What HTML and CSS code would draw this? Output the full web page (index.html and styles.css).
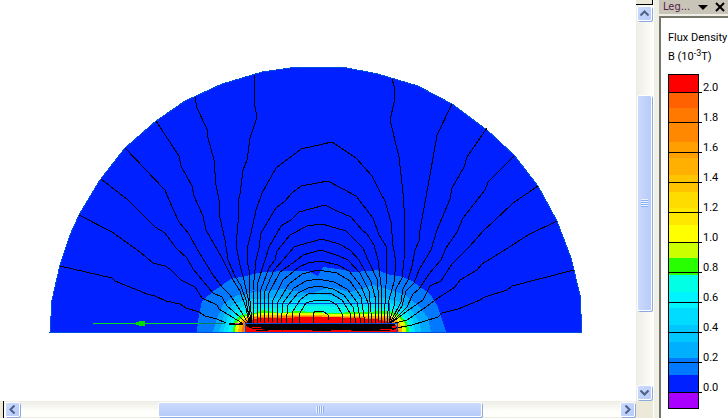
FILE: index.html
```html
<!DOCTYPE html>
<html lang="en">
<head>
<meta charset="utf-8">
<title>Flux Density</title>
<link rel="stylesheet" href="styles.css">
</head>
<body>
<div class="app">
  <main class="view">
    <svg class="plot" viewBox="0 0 636 401" preserveAspectRatio="xMinYMin meet" shape-rendering="crispEdges" role="img" aria-label="Flux density field plot">
      <path fill="#0020ff" stroke="#0050dc" d="M50 332 52 300 60 265 70 235 79 215 100 180 125 148 156 121 185 101 222 84 262 72 297 67 342 67 378 74 418 86 452 104 487 130 514 155 538 186 557 221 571 258 580 295 582 332Z"/>
      <path fill="#0078ff" d="M197 332 198 320 202 301 215 290 231 279 250 275 262 272 290 271 308 271 318 276 323 267 345 270 350 272 371 271 377 270 390 275 400 276 412 281 430 294 437 305 444 325 446 332Z"/>
      <path fill="#00a8ff" d="M213 332 217 318 224 303 238 295 255 292 285 289 310 294 330 287 350 292 373 285 390 290 405 295 420 307 428 318 431 332Z"/>
      <path fill="#00c8ff" d="M219 332 224 315 233 304 248 299 290 298 318 294 350 299 385 298 400 302 413 312 420 323 421 332Z"/>
      <path fill="#00e4ff" d="M223 332 228 318 236 309 252 304 310 300 350 303 390 303 405 310 413 320 415 332Z"/>
      <path fill="#00ffe4" d="M228 332 231 321 237 313 252 309 310 306 389 308 402 314 410 323 411 332Z"/>
      <path fill="#28ff00" d="M233 332 234 322 240 315 255 313 263 310 280 313 297 311 330 313 389 311 398 314 406 321 409 328 409 332Z"/>
      <path fill="#e8ff00" d="M235 332 236 323 242 317 260 313 389 314 398 317 405 324 406 332Z"/>
      <path fill="#ffb000" d="M238 332 240 322 247 317 265 315 389 316 398 321 402 327 402 332Z"/>
      <path fill="#ff7000" d="M242 332 243 322 255 317 300 316 388 318 397 324 399 332Z"/>
      <path fill="#ff0000" d="M245 332V323L258 318 330 317 375 319 390 322 398 327V332Z"/>
      <path class="outline" d="M253.500 323V303.500H389.500V323"/>
      <g class="flux">
        <path d="M60 266 112 278 115 281 147 294 155 296 166 301 180 304 186 308 199 312 205 316 217 319 226 323"/>
        <path d="M79 215 112 232 140 252 153 263 165 266 170 269 181 280 195 287 202 298 217 305 219 309 232 317 242 323"/>
        <path d="M101 179 128 200 155 227 165 233 176 248 187 258 193 269 213 293 222 297 227 306 240 317 246 323"/>
        <path d="M125 148 165 190 169 200 179 222 189 234 197 249 213 275 222 287 230 295 242 313 248 323"/>
        <path d="M156 121 179 156 181 166 192 186 194 196 203 216 206 230 222 258 233 280 240 291 246 308 249 323"/>
        <path d="M195 97 197 108 207 129 208 138 214 160 216 185 219 200 220 218 225 240 228 260 235 276 241 286 246 300 250 323"/>
        <path d="M254 75 254 102 257 117 250 138 247 160 243 170 240 194 238 202 239 212 236 245 240 265 244 280 248 298 251 323"/>
        <path d="M252 323 249 290 249 270 247 260 248 245 251 233 256 210 262 193 276 168 301 149 332 142 356 158 372 176 380 192 385 201 391 222 393 246 396 262 394 282 389 300 387 323"/>
        <path d="M254 323 253 290 256 260 259 248 261 233 276 208 284 202 292 193 301 186 328 181 356 196 373 218 379 235 386 246 387 260 386 285 384 323"/>
        <path d="M257 323 257 285 265 260 269 247 281 226 291 220 299 212 325 205 337 211 351 217 362 230 367 234 374 245 378 260 381 285 381 323"/>
        <path d="M260 323 261 289 269 268 275 260 277 251 290 235 307 226 322 224 346 231 363 248 368 260 377 279 379 300 378 323"/>
        <path d="M264 323 265 291 274 270 283 260 294 247 300 245 322 239 339 244 350 250 359 260 371 282 376 300 375 323"/>
        <path d="M268 323 269 293 280 272 297 260 303 255 321 250 339 256 348 260 360 273 369 291 372 323"/>
        <path d="M272 323 273 300 283 280 299 267 308 263 321 261 338 265 349 271 361 286 368 303 369 323"/>
        <path d="M277 323 278 302 289 284 302 274 318 270 337 273 350 281 361 297 365 323"/>
        <path d="M281 323 283 303 294 288 306 281 318 279 334 282 347 289 357 302 361 323"/>
        <path d="M286 323 288 305 298 293 308 288 318 286 333 289 344 295 353 307 356 323"/>
        <path d="M292 323 293 311 300 300 308 294 330 293 342 300 350 313 350 323"/>
        <path d="M299 323 300 313 306 303 316 300 330 301 337 305 342 314 342 323"/>
        <path d="M313 323V313L316 311H323L328 315V320"/>
        <path d="M392 79 394 86 394 103 390 120 399 157 403 193 405 222 404 260 402 278 396 289 394 306 389 323"/>
        <path d="M452 104 437 135 430 175 420 230 419 241 415 250 412 266 408 280 403 289 401 302 390 323"/>
        <path d="M487 128 467 157 464 167 452 188 450 199 437 230 431 250 419 270 414 283 406 291 402 306 391 323"/>
        <path d="M514 156 488 182 485 190 463 218 457 232 446 248 441 260 429 274 419 289 413 294 407 307 391 323"/>
        <path d="M538 186 513 203 493 222 484 230 470 246 452 264 441 281 430 286 423 300 410 309 391 323"/>
        <path d="M557 221 528 235 503 251 482 264 477 270 460 280 455 287 435 300 426 307 407 320 391 324"/>
        <path d="M574 270 512 286 507 290 485 297 480 300 458 309 442 313 438 317 412 325 391 329"/>
      </g>
      <path fill="#000" d="M245 323H390L397 325 390 327 396 329 388 331H285L279 330 257 331 251 328 247 327Z"/>
      <path fill="none" stroke="#f00" d="M252 327.500H261M253 329.500H263M260 331.500H282M283 330.500H312M331 330.500H351M350 331.500H390M380 329.500H392"/>
      <path class="outline" d="M50 332.500H582M245.500 332V323.500H397.500V332"/>
      <path fill="none" stroke="#00dc20" d="M93 323.500H199"/>
      <path fill="none" stroke="#008060" d="M199 323.500H225"/>
      <path fill="none" stroke="#000" stroke-width="2" d="M229 324H243"/>
      <path fill="none" stroke="#e040b0" d="M235 323.500H239"/>
      <path fill="#00dc00" d="M134 323 140 321H145V326H140L134 324Z"/>
    </svg>
  </main>

  <div class="bar vertical">
    <span class="splitbox"></span>
    <button class="key" type="button" aria-label="Scroll up"><svg viewBox="0 0 9 9"><path d="M.5 6.500 4.500 2.500 8.500 6.500"/></svg></button>
    <span class="gap"></span>
    <span class="thumb"><i class="grip"></i></span>
    <span class="gap"></span>
    <button class="key" type="button" aria-label="Scroll down"><svg viewBox="0 0 9 9"><path d="M.5 2.500 4.500 6.500 8.500 2.500"/></svg></button>
  </div>

  <div class="bar horizontal">
    <span class="splitbox"></span>
    <button class="key" type="button" aria-label="Scroll left"><svg viewBox="0 0 9 9"><path d="M6.500 .5 2.500 4.500 6.500 8.500"/></svg></button>
    <span class="gap"></span>
    <span class="thumb"><i class="grip"></i></span>
    <span class="gap"></span>
    <button class="key" type="button" aria-label="Scroll right"><svg viewBox="0 0 9 9"><path d="M2.500 .5 6.500 4.500 2.500 8.500"/></svg></button>
  </div>

  <aside class="panel">
    <header class="caption">
      <h2>Leg...</h2>
      <button type="button" aria-label="Panel menu"><svg width="10" height="10" viewBox="0 0 10 10"><path fill="#000" d="M0 3H10L5 8Z"/></svg></button>
      <button type="button" aria-label="Close"><svg width="10" height="10" viewBox="0 0 10 10"><path fill="none" stroke="#000" stroke-width="2" d="M1 1 9 9M9 1 1 9"/></svg></button>
    </header>
    <section class="legend">
      <p>Flux Density</p>
      <p>B (10<sup>-3</sup>T)</p>
      <div class="scale">
        <div class="colors"></div>
        <ol>
          <li>2.0</li><li>1.8</li><li>1.6</li><li>1.4</li><li>1.2</li><li>1.0</li><li>0.8</li><li>0.6</li><li>0.4</li><li>0.2</li><li>0.0</li>
        </ol>
      </div>
    </section>
  </aside>
</div>
</body>
</html>
```
FILE: styles.css
```css
* { box-sizing: border-box; }

body {
  margin: 0;
  background: #ece9d8;
  color: #000;
  font: 11px/19px Roboto, "Liberation Sans", sans-serif;
}

button {
  padding: 0;
  border: 0;
  background: none;
}

.app {
  display: grid;
  grid-template: minmax(0, 1fr) 17px / minmax(0, 1fr) 17px 75px;
  height: 100vh;
  overflow: hidden;
}

.view {
  min-height: 0;
  background: #fff;
}

.plot {
  display: block;
  width: 100%;
  height: 100%;
}

.flux {
  fill: none;
  stroke: #000;
}

.outline {
  fill: none;
  stroke: #0050dc;
}

/* Scroll bars */
.bar { display: flex; }

.vertical {
  grid-area: 1 / 2;
  flex-direction: column;
  background: linear-gradient(90deg, #eeede5, #fefefb);
}

.horizontal {
  grid-area: 2 / 1;
  background: linear-gradient(#eeede5, #fefefb 60%, #fefefb 94%, #eeede5 94%);
}

.splitbox { background: #ece9d8; }

.vertical .splitbox {
  height: 5px;
  border-right: 1px solid #000;
  border-bottom: 1px solid #000;
}

.horizontal .splitbox {
  width: 4px;
  border-right: 1px solid #000;
}

.gap { flex: 73; }

.thumb {
  display: flex;
  flex: 217;
  align-items: center;
  justify-content: center;
}

.horizontal .gap { flex: 137; }
.horizontal .thumb { flex: 325; }

.key,
.thumb {
  margin: 1px;
  border: 1px solid #fff;
  border-radius: 2px;
  box-shadow: 1px 1px 0 #8caae0;
  background: linear-gradient(135deg, #cbdafd, #b7cbfa);
}

.vertical .thumb { background: linear-gradient(90deg, #cbdafd, #b7cbfa); }
.horizontal .thumb { background: linear-gradient(#cbdafd, #b7cbfa); }

.key {
  display: grid;
  flex: 0 0 15px;
  place-items: center;
}

.key svg {
  width: 9px;
  height: 9px;
  fill: none;
  stroke: #4d6185;
  stroke-width: 2;
}

.grip {
  width: 7px;
  height: 8px;
  background: repeating-linear-gradient(#eef4fe 0 1px, #8cb0f8 1px 2px);
}

.horizontal .grip {
  width: 8px;
  height: 7px;
  background: repeating-linear-gradient(90deg, #eef4fe 0 1px, #8cb0f8 1px 2px);
}

/* Legend panel */
.panel {
  display: flex;
  grid-area: 1 / 3 / 3 / 4;
  flex-direction: column;
  padding-left: 6px;
  background: linear-gradient(90deg, #fff 1px, #f0efe6 1px);
}

.caption {
  display: flex;
  align-items: center;
  gap: 7px;
  height: 14px;
  padding: 0 3px 0 4px;
  background: #c8c5b8;
}

.caption h2 {
  flex: 1;
  margin: 0;
  color: #582048;
  font: 11px/12px "DejaVu Sans Condensed", "DejaVu Sans", sans-serif;
}

.caption button {
  width: 10px;
  height: 10px;
}

.caption svg { display: block; }

.legend {
  flex: 1;
  margin-top: 2px;
  padding: 10px 0 0 7px;
  border: solid #77766a;
  border-width: 2px 0 0 2px;
  background: #fff;
}

.legend p {
  margin: 0;
  white-space: nowrap;
}

.legend sup {
  font-size: 9px;
  line-height: 0;
  vertical-align: 4px;
}

.scale {
  display: flex;
  height: 335px;
  margin-top: 8px;
}

.colors {
  width: 31px;
  border: 1px solid #000;
  background: linear-gradient(
    #f00 18px, #ff6000 18px 33px, #ff7800 33px 48px, #ff8800 48px 67px,
    #ffa000 67px 83px, #ffb000 83px 100px, #ffc400 100px 117px,
    #ffdc00 117px 133px, #ffe800 133px 150px, #ff0 150px 168px,
    #cf0 168px 183px, #28ff00 183px 200px, #00ffe4 200px 217px,
    #00f4ff 217px 233px, #00dcff 233px 250px, #00c8ff 250px 267px,
    #00b0ff 267px 283px, #0078ff 283px 300px, #0020ff 300px 318px, #a0f 318px);
}

.scale ol {
  margin: 4px 0 0 -31px;
  padding: 0;
  list-style: none;
}

.scale li {
  height: 30px;
  padding-left: 35px;
  background: linear-gradient(#000, #000) 0 14px / 34px 1px no-repeat;
}
```
